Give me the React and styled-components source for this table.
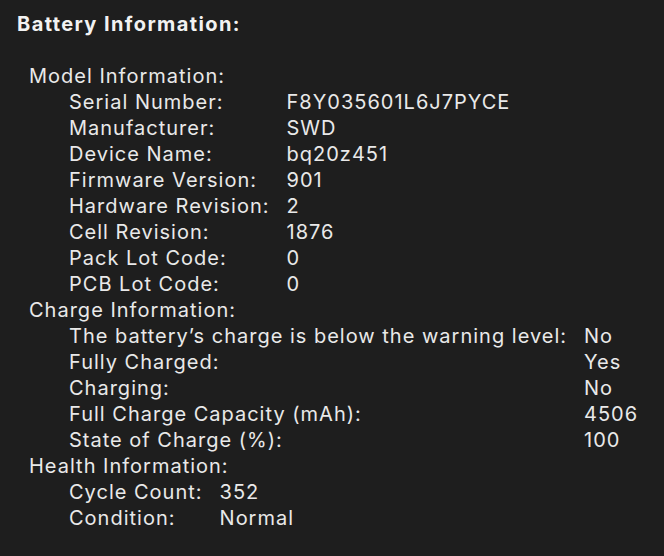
import React from 'react';
import styled, { createGlobalStyle } from 'styled-components';

const GlobalStyle = createGlobalStyle`
    html, body {
        margin: 0;
        padding: 0;
        background-color: #1e1e1e;
    }
    body {
        font-family: Inter, "Noto Sans", "Liberation Sans", sans-serif;
        color: #e9e9e9;
        -webkit-font-smoothing: antialiased;
    }
`;

const Panel = styled.div`
    width: 664px;
    height: 556px;
    box-sizing: border-box;
    padding: 11px 0 0 17px;
    background-color: #1e1e1e;
    overflow: hidden;
    font-size: 20px;
    line-height: 26px;
    letter-spacing: 1px;
`;

const Title = styled.h1`
    margin: 0 0 26px 0;
    font-size: 20px;
    line-height: 26px;
    font-weight: 700;
    letter-spacing: 1.4px;
    color: #f2f2f2;
`;

const Body = styled.div`
    padding-left: 12px;
`;

const SectionHeading = styled.div`
    white-space: nowrap;
`;

const Rows = styled.div`
    display: grid;
    grid-template-columns: max-content max-content;
    column-gap: 17px;
    padding-left: 40px;
`;

const Label = styled.span`
    white-space: nowrap;
`;

const Value = styled.span`
    white-space: nowrap;
`;

const sections = [
    {
        name: 'Model Information:',
        rows: [
            ['Serial Number:', 'F8Y035601L6J7PYCE'],
            ['Manufacturer:', 'SWD'],
            ['Device Name:', 'bq20z451'],
            ['Firmware Version:', '901'],
            ['Hardware Revision:', '2'],
            ['Cell Revision:', '1876'],
            ['Pack Lot Code:', '0'],
            ['PCB Lot Code:', '0'],
        ],
    },
    {
        name: 'Charge Information:',
        rows: [
            ['The battery\u2019s charge is below the warning level:', 'No'],
            ['Fully Charged:', 'Yes'],
            ['Charging:', 'No'],
            ['Full Charge Capacity (mAh):', '4506'],
            ['State of Charge (%):', '100'],
        ],
    },
    {
        name: 'Health Information:',
        rows: [
            ['Cycle Count:', '352'],
            ['Condition:', 'Normal'],
        ],
    },
];

const App = () => {
    return (
        <>
            <GlobalStyle />
            <Panel>
                <Title>Battery Information:</Title>
                <Body>
                    {sections.map(section => (
                        <div key={section.name}>
                            <SectionHeading>{section.name}</SectionHeading>
                            <Rows>
                                {section.rows.map(([label, value]) => (
                                    <React.Fragment key={label}>
                                        <Label>{label}</Label>
                                        <Value>{value}</Value>
                                    </React.Fragment>
                                ))}
                            </Rows>
                        </div>
                    ))}
                </Body>
            </Panel>
        </>
    );
};

export default App;
